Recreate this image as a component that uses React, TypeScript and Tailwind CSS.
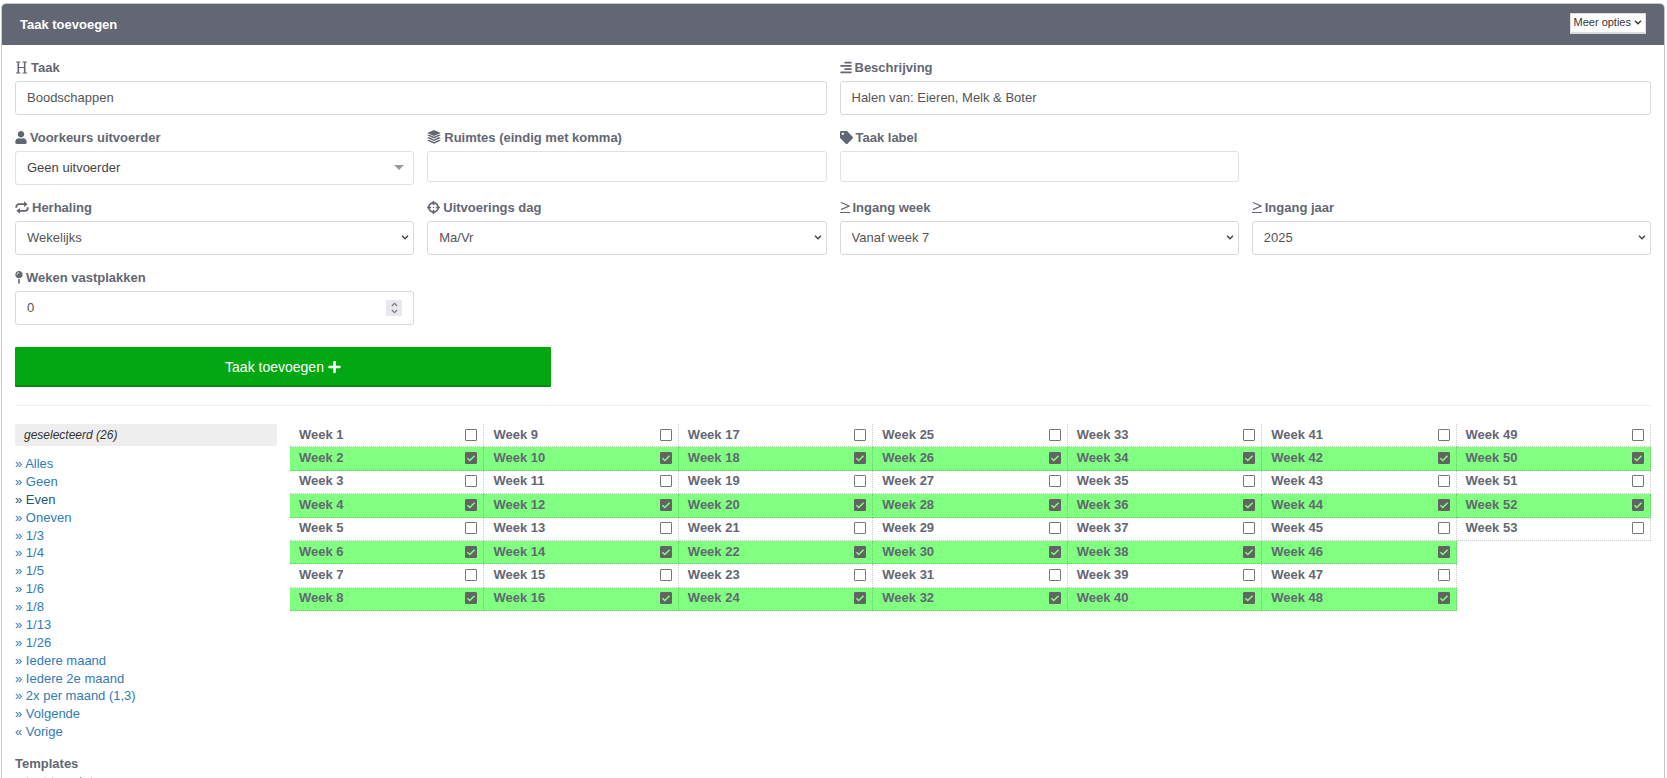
import { useState, type ComponentType, type ReactNode } from "react";
import { FaAlignRight, FaCrosshairs, FaMapPin, FaPlus, FaTag, FaUser } from "react-icons/fa";

const presets = [
  "Alles",
  "Geen",
  "Even",
  "Oneven",
  "1/3",
  "1/4",
  "1/5",
  "1/6",
  "1/8",
  "1/13",
  "1/26",
  "Iedere maand",
  "Iedere 2e maand",
  "2x per maand (1,3)",
  "Volgende",
];

const weeks = Array.from({ length: 53 }, (_, i) => i + 1);

const control =
  "block h-[34px] w-full appearance-none rounded-[3px] border border-[#d8d8d8] bg-white px-[11px] pb-px text-[13px] text-[#555] outline-none";

const lightControl =
  "block w-full appearance-none rounded-[3px] border border-[#e1e1e1] bg-white px-[11px] text-[13px] text-[#444] outline-none";

function HeadingIcon() {
  return (
    <svg viewBox="0 0 13 13" className="h-[13px] w-[13px]" fill="none" stroke="currentColor">
      <path d="M1 1h4.5M7.5 1H12M1 12h4.5M7.5 12H12M3.5 6.5h6" strokeWidth="1.2" />
      <path d="M3.3 1v11M9.7 1v11" strokeWidth="1.6" />
    </svg>
  );
}

function LayersIcon() {
  return (
    <svg viewBox="0 0 14 14" className="h-[14px] w-[14px]" fill="currentColor">
      <path d="M7 0 13.8 2.9 7 6 .2 2.9z" />
      <path d="M.2 5.2 2 4.4l5 2.3 5-2.3 1.8.8L7 8.4z" />
      <path d="m.2 7.9 1.8-.8 5 2.3 5-2.3 1.8.8L7 11.1z" />
      <path d="M.2 10.6 2 9.8l5 2.3 5-2.3 1.8.8L7 13.8z" />
    </svg>
  );
}

function RepeatIcon() {
  return (
    <svg viewBox="0 0 14 13" className="h-[13px] w-[14px]" fill="none" stroke="currentColor" strokeWidth="1.8">
      <path d="M1.2 6.8V6a2.8 2.8 0 0 1 2.8-2.8h5.5M12.8 6.2V7A2.8 2.8 0 0 1 10 9.8H4.5" />
      <path d="M9 .3 12.6 3.2 9 6.1zM5 6.9 1.4 9.8 5 12.7z" fill="currentColor" stroke="none" />
    </svg>
  );
}

function GreaterEqualIcon() {
  return (
    <svg viewBox="0 0 10 13" className="h-[13px] w-[10px]" fill="none" stroke="currentColor" strokeWidth="1.2">
      <path d="M1 1.5 9 5 1 8.6M0 11.5h10" />
    </svg>
  );
}

function Chevron({ className }: { className: string }) {
  return (
    <svg viewBox="0 0 8 5" className={className} fill="none" stroke="currentColor" strokeWidth="1.4">
      <path d="M1 .8 4 3.8 7 .8" />
    </svg>
  );
}

type FieldProps = {
  id: string;
  label: string;
  icon: ComponentType<{ className?: string }>;
  iconClass?: string;
  wide?: boolean;
  children: ReactNode;
};

function Field({ id, label, icon: Icon, iconClass, wide, children }: FieldProps) {
  return (
    <div className={wide ? "col-span-2" : ""}>
      <label
        htmlFor={id}
        className="mb-1 flex items-center gap-[3px] pt-px text-[13px] font-bold leading-[18px] text-[#636773]"
      >
        <span className="pb-[2px]">
          <Icon className={iconClass} />
        </span>
        {label}
      </label>
      <div className="relative">{children}</div>
    </div>
  );
}

function Select({ id, value }: { id: string; value: string }) {
  return (
    <>
      <select id={id} className={control}>
        <option>{value}</option>
      </select>
      <Chevron className="pointer-events-none absolute right-[5px] top-[14px] h-[5px] w-2 text-[#444]" />
    </>
  );
}

function WeekCell({ week, checked, onToggle }: { week: number; checked: boolean; onToggle: () => void }) {
  return (
    <label
      className={`flex items-center justify-between border-b border-r border-dotted border-black/20 pb-px pl-[9px] pr-[6px] text-[13px] font-bold leading-[18px] text-[#636773] ${
        checked ? "bg-[#80ff80]" : ""
      }`}
    >
      <span>Week {week}</span>
      <span className="relative block h-3 w-3">
        <input
          type="checkbox"
          checked={checked}
          onChange={onToggle}
          className="block h-3 w-3 appearance-none rounded-[1px] border border-[#777] checked:border-[#636363] checked:bg-[#636363]"
        />
        {checked && (
          <svg
            viewBox="0 0 12 12"
            className="pointer-events-none absolute inset-0 h-3 w-3 text-[#80ff80]"
            fill="none"
            stroke="currentColor"
            strokeWidth="1.5"
          >
            <path d="m2.4 6.2 2.4 2.3 4.8-4.8" />
          </svg>
        )}
      </span>
    </label>
  );
}

export default function App() {
  const [selected, setSelected] = useState<number[]>(weeks.filter((w) => w % 2 === 0));

  const toggle = (week: number) =>
    setSelected((prev) => (prev.includes(week) ? prev.filter((w) => w !== week) : [...prev, week]));

  return (
    <main className="min-h-screen bg-white pl-px pr-[2px] pt-[3px] font-['Liberation_Sans',Arial,sans-serif]">
      <section className="rounded-t-[5px] border border-[#c8c9cb]">
        <header className="flex h-[41px] items-center justify-between rounded-t-[4px] bg-[#636773] px-[18px]">
          <h1 className="text-[13px] font-bold text-white">Taak toevoegen</h1>
          <button
            type="button"
            className="mb-[3px] flex h-[21px] items-center gap-[3px] border border-b-2 border-[#ddd] bg-white px-[3px] text-[11px] text-[#333]"
          >
            Meer opties
            <Chevron className="h-[5px] w-2" />
          </button>
        </header>

        <div className="px-[13px] pb-5 pt-[13px]">
          <form onSubmit={(e) => e.preventDefault()}>
            <div className="grid grid-cols-4 gap-[13px]">
              <Field id="taak" label="Taak" icon={HeadingIcon} wide>
                <input id="taak" defaultValue="Boodschappen" className={control} />
              </Field>
              <Field id="beschrijving" label="Beschrijving" icon={FaAlignRight} iconClass="h-[13px] w-[12px]" wide>
                <input id="beschrijving" defaultValue="Halen van: Eieren, Melk & Boter" className={control} />
              </Field>

              <Field id="uitvoerder" label="Voorkeurs uitvoerder" icon={FaUser} iconClass="h-[13px] w-[12px]">
                <select id="uitvoerder" className={`${lightControl} h-[34px]`}>
                  <option>Geen uitvoerder</option>
                </select>
                <svg
                  viewBox="0 0 10 5"
                  className="pointer-events-none absolute right-[10px] top-[14px] h-[5px] w-[10px] text-[#999]"
                  fill="currentColor"
                >
                  <path d="M0 0h10L5 5z" />
                </svg>
              </Field>
              <Field id="ruimtes" label="Ruimtes (eindig met komma)" icon={LayersIcon}>
                <input id="ruimtes" className={`${lightControl} h-[31px]`} />
              </Field>
              <Field id="label" label="Taak label" icon={FaTag} iconClass="h-[13px] w-[13px]">
                <input id="label" className={`${lightControl} h-[31px]`} />
              </Field>
              <div />

              <Field id="herhaling" label="Herhaling" icon={RepeatIcon}>
                <Select id="herhaling" value="Wekelijks" />
              </Field>
              <Field id="dag" label="Uitvoerings dag" icon={FaCrosshairs} iconClass="h-[13px] w-[13px]">
                <Select id="dag" value="Ma/Vr" />
              </Field>
              <Field id="week" label="Ingang week" icon={GreaterEqualIcon}>
                <Select id="week" value="Vanaf week 7" />
              </Field>
              <Field id="jaar" label="Ingang jaar" icon={GreaterEqualIcon}>
                <Select id="jaar" value="2025" />
              </Field>

              <Field id="vastplakken" label="Weken vastplakken" icon={FaMapPin} iconClass="h-[13px] w-[8px]">
                <input
                  id="vastplakken"
                  type="number"
                  defaultValue={0}
                  className={`${control} [appearance:textfield] [&::-webkit-inner-spin-button]:appearance-none`}
                />
                <span className="pointer-events-none absolute right-[12px] top-[9px] flex h-4 w-4 flex-col items-center justify-between bg-[#e9e9ed] py-[2px] text-[#777783]">
                  <Chevron className="h-[5px] w-[7px] rotate-180" />
                  <Chevron className="h-[5px] w-[7px]" />
                </span>
              </Field>
            </div>

            <button
              type="submit"
              className="mt-[22px] flex h-10 w-full max-w-[536px] items-center justify-center gap-1 rounded-[1px] border-b-2 border-[#048a0f] bg-[#02a812] pt-[2px] text-[14px] text-white"
            >
              Taak toevoegen
              <FaPlus className="h-[14px] w-[13px]" />
            </button>
          </form>

          <hr className="my-[18px] border-[#eee]" />

          <div className="flex items-start gap-[13px]">
            <aside className="w-[262px] shrink-0 text-[13px]">
              <p className="rounded-[2px] bg-[#eee] px-[9px] text-[12px] italic leading-[22px] text-[#333]">
                geselecteerd ({selected.length})
              </p>
              <ul className="mt-[9px] grid min-h-[286px] auto-rows-fr leading-[17px] text-[#337ab7]">
                {presets.map((preset) => (
                  <li key={preset}>
                    <a href="#" className={preset === "Even" ? "text-[#23527c]" : ""}>
                      » {preset}
                    </a>
                  </li>
                ))}
                <li>
                  <a href="#">« Vorige</a>
                </li>
              </ul>
              <h2 className="mt-[14px] font-bold leading-[18px] text-[#636773]">Templates</h2>
              <a href="#" className="block leading-[18px] text-[#337ab7]">
                » test template
              </a>
            </aside>

            <div className="grid min-h-[187px] flex-1 grid-flow-col grid-cols-7 grid-rows-8">
              {weeks.map((week) => (
                <WeekCell
                  key={week}
                  week={week}
                  checked={selected.includes(week)}
                  onToggle={() => toggle(week)}
                />
              ))}
            </div>
          </div>
        </div>
      </section>
    </main>
  );
}
